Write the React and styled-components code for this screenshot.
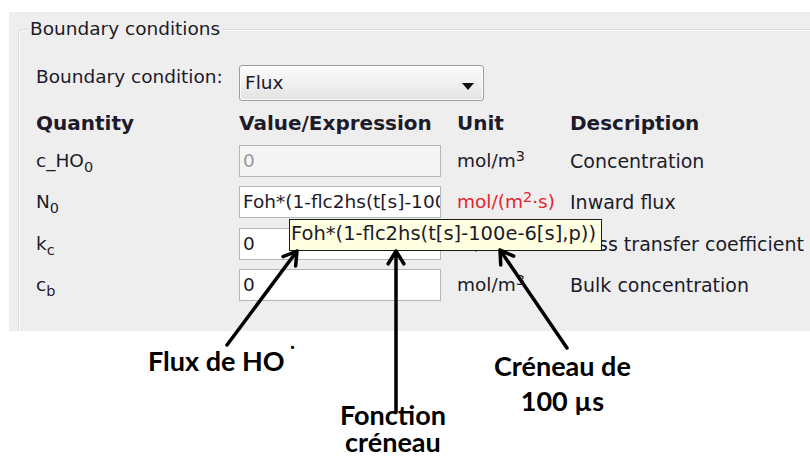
import React from 'react';
import styled, { createGlobalStyle } from 'styled-components';

const GlobalStyle = createGlobalStyle`
  html, body {
    margin: 0;
    padding: 0;
    background: #ffffff;
  }
`;

const Page = styled.div`
  position: relative;
  width: 810px;
  height: 459px;
  overflow: hidden;
  background: #ffffff;
  font-family: 'DejaVu Sans', 'Liberation Sans', sans-serif;
  color: #1d1b2a;
`;

const Panel = styled.div`
  margin: 12px 0 0 9px;
  height: 319px;
  padding: 17px 0 0 9px;
  box-sizing: border-box;
  background: #eeeeee;
  overflow: hidden;
`;

const GroupBox = styled.div`
  position: relative;
  height: 100%;
  box-sizing: border-box;
  border-top: 1px solid #d3dbe2;
  border-left: 1px solid #d3dbe2;
  border-top-left-radius: 5px;
  box-shadow: inset 1px 1px 0 #fbfbfb;
  padding: 35px 0 0 17px;
`;

const GroupTitle = styled.span`
  position: absolute;
  top: -12px;
  left: 9px;
  padding: 0 2px;
  background: #eeeeee;
  font-size: 18.5px;
  line-height: 22px;
`;

const ConditionRow = styled.div`
  display: flex;
  align-items: flex-start;
  height: 36px;
`;

const Label = styled.div`
  width: 203px;
  font-size: 18.5px;
  line-height: 22px;
  padding-top: 1px;
`;

const Combo = styled.div`
  width: 245px;
  height: 36px;
  box-sizing: border-box;
  border: 1px solid #9a9c9e;
  border-radius: 3px;
  background: linear-gradient(#fbfbfb, #f2f2f2 45%, #e2e2e2);
  box-shadow: inset 0 0 0 1px #ffffff;
  font-size: 18.5px;
  line-height: 36px;
  padding-left: 5px;
  display: flex;
  align-items: center;
  justify-content: space-between;
`;

const ComboArrow = styled.span`
  width: 0;
  height: 0;
  margin-right: 9px;
  margin-top: 7px;
  border-left: 6.5px solid transparent;
  border-right: 6.5px solid transparent;
  border-top: 7px solid #111111;
`;

const Table = styled.div`
  position: relative;
  display: grid;
  grid-template-columns: 203px 218px 113px auto;
  grid-template-rows: 24px repeat(4, 32px);
  row-gap: 9.5px;
  margin-top: 10px;
  align-items: center;
`;

const Head = styled.div`
  font-size: 20px;
  font-weight: bold;
  line-height: 24px;
  white-space: nowrap;
`;

const Cell = styled.div`
  font-size: 18.5px;
  line-height: 22px;
  white-space: nowrap;
  color: ${(p) => (p.$red ? '#e4252e' : 'inherit')};
`;

const Description = styled(Cell)`
  font-size: 19px;
`;

const Field = styled.div`
  width: 202px;
  height: 32px;
  box-sizing: border-box;
  border: 1px solid #b3b6ba;
  background: ${(p) => (p.$disabled ? '#f5f5f5' : '#ffffff')};
  color: ${(p) => (p.$disabled ? '#9a9a9a' : 'inherit')};
  font-size: 18.5px;
  line-height: 30px;
  padding-left: 3px;
  white-space: nowrap;
  overflow: hidden;
`;

const Sub = styled.sub`
  font-size: 0.78em;
  vertical-align: -0.35em;
  line-height: 0;
`;

const Sup = styled.sup`
  font-size: 0.78em;
  vertical-align: 0.45em;
  line-height: 0;
`;

const Tooltip = styled.div`
  position: absolute;
  left: 253px;
  top: 108px;
  width: 313px;
  height: 32px;
  box-sizing: border-box;
  border: 1px solid #1a1a1a;
  background: #ffffe1;
  font-size: 19.5px;
  line-height: 28px;
  padding-left: 1px;
  white-space: nowrap;
`;

const Arrows = styled.svg`
  position: absolute;
  left: 0;
  top: 0;
  pointer-events: none;
`;

const Note = styled.div`
  position: absolute;
  left: ${(p) => p.$x}px;
  top: ${(p) => p.$y}px;
  font-family: Lato, 'Open Sans', sans-serif;
  font-weight: bold;
  font-size: 27px;
  line-height: ${(p) => p.$lh || 27}px;
  text-align: center;
  color: #000000;
  white-space: nowrap;
`;

const Dot = styled.span`
  position: relative;
  top: -10px;
  margin-left: 4px;
  font-size: 20px;
`;

// tip -> tail, with an open chevron head at the tip
function arrowPath(tx, ty, ex, ey, len = 15, spread = 0.55) {
  const a = Math.atan2(ey - ty, ex - tx);
  const p1 = [tx + len * Math.cos(a - spread), ty + len * Math.sin(a - spread)];
  const p2 = [tx + len * Math.cos(a + spread), ty + len * Math.sin(a + spread)];
  return `M${ex} ${ey} L${tx} ${ty} M${p1[0]} ${p1[1]} L${tx} ${ty} L${p2[0]} ${p2[1]}`;
}

const arrows = [
  [297, 251, 227, 345],
  [396, 251, 396, 412],
  [500, 250, 567, 348],
];

const App = () => {
  return (
    <Page>
      <GlobalStyle />
      <Panel>
        <GroupBox>
          <GroupTitle>Boundary conditions</GroupTitle>
          <ConditionRow>
            <Label>Boundary condition:</Label>
            <Combo>
              Flux
              <ComboArrow />
            </Combo>
          </ConditionRow>

          <Table>
            <Head>Quantity</Head>
            <Head>Value/Expression</Head>
            <Head>Unit</Head>
            <Head>Description</Head>

            <Cell>
              c_HO<Sub>0</Sub>
            </Cell>
            <Field $disabled>0</Field>
            <Cell>
              mol/m<Sup>3</Sup>
            </Cell>
            <Description>Concentration</Description>

            <Cell>
              N<Sub>0</Sub>
            </Cell>
            <Field>Foh*(1-flc2hs(t[s]-100e-6[s],p))</Field>
            <Cell $red>
              mol/(m<Sup>2</Sup>·s)
            </Cell>
            <Description>Inward flux</Description>

            <Cell>
              k<Sub>c</Sub>
            </Cell>
            <Field>0</Field>
            <Cell>m/s</Cell>
            <Description>Mass transfer coefficient</Description>

            <Cell>
              c<Sub>b</Sub>
            </Cell>
            <Field>0</Field>
            <Cell>
              mol/m<Sup>3</Sup>
            </Cell>
            <Description>Bulk concentration</Description>

            <Tooltip>Foh*(1-flc2hs(t[s]-100e-6[s],p))</Tooltip>
          </Table>
        </GroupBox>
      </Panel>

      <Arrows width="810" height="459" viewBox="0 0 810 459">
        {arrows.map(([tx, ty, ex, ey], i) => (
          <path
            key={i}
            d={arrowPath(tx, ty, ex, ey)}
            fill="none"
            stroke="#000"
            strokeWidth="3.5"
            strokeLinecap="round"
            strokeLinejoin="round"
          />
        ))}
      </Arrows>

      <Note $x={148} $y={347}>
        Flux de HO<Dot>˙</Dot>
      </Note>
      <Note $x={340} $y={401}>
        Fonction
        <br />
        créneau
      </Note>
      <Note $x={494} $y={348} $lh={35}>
        Créneau de
        <br />
        100 µs
      </Note>
    </Page>
  );
};

export default App;
